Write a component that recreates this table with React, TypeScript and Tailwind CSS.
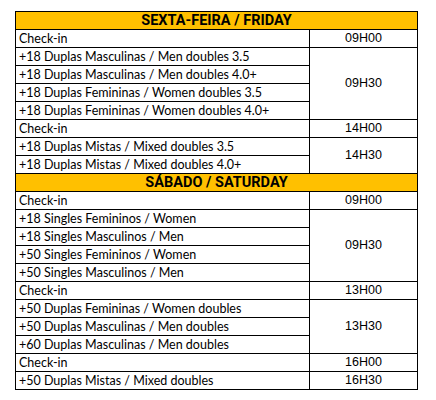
type Group = { time: string; rows: string[] };
type Day = { title: string; groups: Group[] };

const days: Day[] = [
  {
    title: "SEXTA-FEIRA / FRIDAY",
    groups: [
      { time: "09H00", rows: ["Check-in"] },
      {
        time: "09H30",
        rows: [
          "+18 Duplas Masculinas / Men doubles 3.5",
          "+18 Duplas Masculinas / Men doubles 4.0+",
          "+18 Duplas Femininas / Women doubles 3.5",
          "+18 Duplas Femininas / Women doubles 4.0+",
        ],
      },
      { time: "14H00", rows: ["Check-in"] },
      {
        time: "14H30",
        rows: ["+18 Duplas Mistas / Mixed doubles 3.5", "+18 Duplas Mistas / Mixed doubles 4.0+"],
      },
    ],
  },
  {
    title: "SÁBADO / SATURDAY",
    groups: [
      { time: "09H00", rows: ["Check-in"] },
      {
        time: "09H30",
        rows: [
          "+18 Singles Femininos / Women",
          "+18 Singles Masculinos / Men",
          "+50 Singles Femininos / Women",
          "+50 Singles Masculinos / Men",
        ],
      },
      { time: "13H00", rows: ["Check-in"] },
      {
        time: "13H30",
        rows: [
          "+50 Duplas Femininas / Women doubles",
          "+50 Duplas Masculinas / Men doubles",
          "+60 Duplas Masculinas / Men doubles",
        ],
      },
      { time: "16H00", rows: ["Check-in"] },
      { time: "16H30", rows: ["+50 Duplas Mistas / Mixed doubles"] },
    ],
  },
];

export default function App() {
  return (
    <div className="w-[436px] h-[400px] bg-white pt-[11px] pl-[15px]">
      <table className="border-collapse w-[402px] table-fixed text-black">
        <colgroup>
          <col className="w-[294px]" />
          <col className="w-[108px]" />
        </colgroup>
        <tbody>
          {days.map((day) => (
            <>
              <tr key={day.title} className="h-[18px]">
                <td
                  colSpan={2}
                  className="border border-black bg-[#ffc000] p-0 text-center align-middle text-[14.5px] leading-[17px] font-bold font-['Roboto',sans-serif]"
                >
                  {day.title}
                </td>
              </tr>
              {day.groups.map((g) =>
                g.rows.map((r, i) => (
                  <tr key={day.title + g.time + r} className="h-[18px]">
                    <td className="border border-black p-0 pl-[3px] align-middle text-[12.5px] leading-[17px] font-['Lato',sans-serif] whitespace-nowrap">
                      {r}
                    </td>
                    {i === 0 && (
                      <td
                        rowSpan={g.rows.length}
                        className="border border-black p-0 text-center align-middle text-[12.5px] leading-[17px] font-['Liberation_Sans',Arial,sans-serif]"
                      >
                        {g.time}
                      </td>
                    )}
                  </tr>
                ))
              )}
            </>
          ))}
        </tbody>
      </table>
    </div>
  );
}
